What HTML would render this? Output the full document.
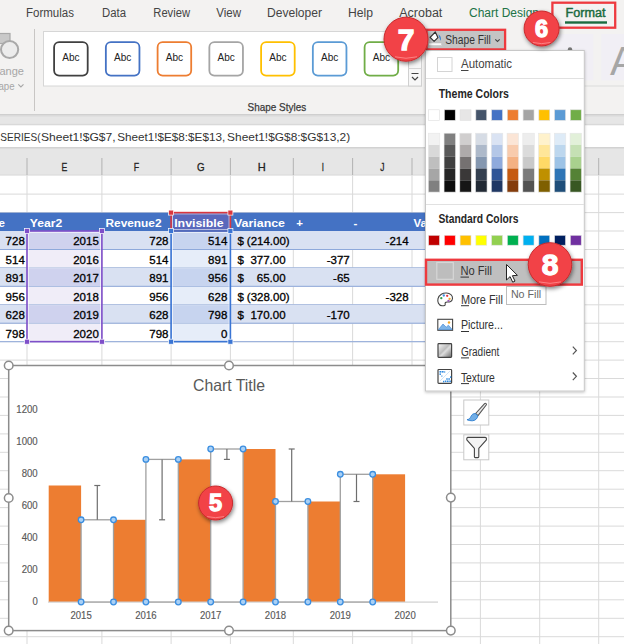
<!DOCTYPE html><html><head><meta charset="utf-8"><style>html,body{margin:0;padding:0;background:#fff;overflow:hidden}svg{display:block}text{font-family:"Liberation Sans",sans-serif}</style></head><body>
<svg width="624" height="644" viewBox="0 0 624 644">
<defs><filter id="sh" x="-20%" y="-20%" width="140%" height="140%"><feGaussianBlur in="SourceAlpha" stdDeviation="2"/><feOffset dx="1" dy="2"/><feComponentTransfer><feFuncA type="linear" slope="0.5"/></feComponentTransfer><feMerge><feMergeNode/><feMergeNode in="SourceGraphic"/></feMerge></filter>
<filter id="msh" x="-10%" y="-10%" width="120%" height="120%"><feGaussianBlur in="SourceAlpha" stdDeviation="1.5"/><feOffset dx="0" dy="1"/><feComponentTransfer><feFuncA type="linear" slope="0.25"/></feComponentTransfer><feMerge><feMergeNode/><feMergeNode in="SourceGraphic"/></feMerge></filter>
<radialGradient id="rg" cx="0.45" cy="0.4" r="0.6"><stop offset="0" stop-color="#ff4d4d"/><stop offset="1" stop-color="#f03a3a"/></radialGradient>
</defs>
<rect x="0" y="0" width="624" height="114" fill="#f3f2f1"/>
<text x="26" y="16.7" font-size="12" fill="#444" font-weight="normal" text-anchor="start" textLength="48" lengthAdjust="spacingAndGlyphs" >Formulas</text>
<text x="102" y="16.7" font-size="12" fill="#444" font-weight="normal" text-anchor="start" textLength="24" lengthAdjust="spacingAndGlyphs" >Data</text>
<text x="153.3" y="16.7" font-size="12" fill="#444" font-weight="normal" text-anchor="start" textLength="36.7" lengthAdjust="spacingAndGlyphs" >Review</text>
<text x="216.2" y="16.7" font-size="12" fill="#444" font-weight="normal" text-anchor="start" textLength="24.8" lengthAdjust="spacingAndGlyphs" >View</text>
<text x="267" y="16.7" font-size="12" fill="#444" font-weight="normal" text-anchor="start" textLength="55" lengthAdjust="spacingAndGlyphs" >Developer</text>
<text x="348" y="16.7" font-size="12" fill="#444" font-weight="normal" text-anchor="start" textLength="25" lengthAdjust="spacingAndGlyphs" >Help</text>
<text x="399.3" y="16.7" font-size="12" fill="#444" font-weight="normal" text-anchor="start" textLength="43" lengthAdjust="spacingAndGlyphs" >Acrobat</text>
<text x="469" y="16.7" font-size="12" fill="#217346" font-weight="normal" text-anchor="start" textLength="70" lengthAdjust="spacingAndGlyphs" >Chart Design</text>
<text x="565.6" y="16.7" font-size="12" fill="#1b6b3f" font-weight="normal" text-anchor="start" textLength="40" lengthAdjust="spacingAndGlyphs" stroke="#1b6b3f" stroke-width="0.45">Format</text>
<rect x="565" y="21.3" width="42" height="2.4" fill="#1b6b3f"/>
<rect x="552.4" y="2.7" width="62.8" height="25" fill="none" stroke="#ee3a3f" stroke-width="2.3"/>
<rect x="-4" y="33.5" width="14" height="10" fill="#c9c9c9" stroke="#a9a9a9" stroke-width="1.2"/>
<circle cx="9.6" cy="49.5" r="8.6" fill="#ececec" stroke="#a9a9a9" stroke-width="2"/>
<text x="-0.5" y="74.9" font-size="11.3" fill="#a6a6a6" font-weight="normal" text-anchor="start" textLength="24.5" lengthAdjust="spacingAndGlyphs" >ange</text>
<text x="-1.5" y="89.5" font-size="11.3" fill="#a6a6a6" font-weight="normal" text-anchor="start" textLength="16.1" lengthAdjust="spacingAndGlyphs" >ape</text>
<path d="M18.3 84.3 l2.6 2.6 l2.6 -2.6" fill="none" stroke="#a6a6a6" stroke-width="1.1"/>
<rect x="34" y="29" width="1" height="82" fill="#c8c6c4"/>
<rect x="43.5" y="31.5" width="378" height="54.5" fill="#fff" stroke="#d6d6d6" stroke-width="1"/>
<rect x="54.10" y="42.2" width="33.6" height="33.4" rx="5" fill="#fff" stroke="#404040" stroke-width="1.8"/>
<text x="71.0" y="60.9" font-size="10.7" fill="#222" font-weight="normal" text-anchor="middle" textLength="17.3" lengthAdjust="spacingAndGlyphs" >Abc</text>
<rect x="105.85" y="42.2" width="33.6" height="33.4" rx="5" fill="#fff" stroke="#4472c4" stroke-width="1.8"/>
<text x="122.75" y="60.9" font-size="10.7" fill="#222" font-weight="normal" text-anchor="middle" textLength="17.3" lengthAdjust="spacingAndGlyphs" >Abc</text>
<rect x="157.60" y="42.2" width="33.6" height="33.4" rx="5" fill="#fff" stroke="#ed7d31" stroke-width="1.8"/>
<text x="174.5" y="60.9" font-size="10.7" fill="#222" font-weight="normal" text-anchor="middle" textLength="17.3" lengthAdjust="spacingAndGlyphs" >Abc</text>
<rect x="209.35" y="42.2" width="33.6" height="33.4" rx="5" fill="#fff" stroke="#a5a5a5" stroke-width="1.8"/>
<text x="226.25" y="60.9" font-size="10.7" fill="#222" font-weight="normal" text-anchor="middle" textLength="17.3" lengthAdjust="spacingAndGlyphs" >Abc</text>
<rect x="261.10" y="42.2" width="33.6" height="33.4" rx="5" fill="#fff" stroke="#ffc000" stroke-width="1.8"/>
<text x="277.99999999999994" y="60.9" font-size="10.7" fill="#222" font-weight="normal" text-anchor="middle" textLength="17.3" lengthAdjust="spacingAndGlyphs" >Abc</text>
<rect x="312.85" y="42.2" width="33.6" height="33.4" rx="5" fill="#fff" stroke="#5b9bd5" stroke-width="1.8"/>
<text x="329.74999999999994" y="60.9" font-size="10.7" fill="#222" font-weight="normal" text-anchor="middle" textLength="17.3" lengthAdjust="spacingAndGlyphs" >Abc</text>
<rect x="364.60" y="42.2" width="33.6" height="33.4" rx="5" fill="#fff" stroke="#70ad47" stroke-width="1.8"/>
<text x="381.49999999999994" y="60.9" font-size="10.7" fill="#222" font-weight="normal" text-anchor="middle" textLength="17.3" lengthAdjust="spacingAndGlyphs" >Abc</text>
<rect x="408.5" y="31.5" width="13" height="54.5" fill="#f7f7f7" stroke="#d0d0d0"/>
<line x1="408.5" y1="50" x2="421.5" y2="50" stroke="#d6d6d6"/>
<line x1="408.5" y1="68.5" x2="421.5" y2="68.5" stroke="#d6d6d6"/>
<path d="M411.5 73.5 h7 M412 77 l3 3 l3 -3" fill="none" stroke="#444" stroke-width="1.2"/>
<text x="276.9" y="111" font-size="11.5" fill="#3a3a3a" font-weight="normal" text-anchor="middle" textLength="58.6" lengthAdjust="spacingAndGlyphs" stroke="#3a3a3a" stroke-width="0.25">Shape Styles</text>
<rect x="553.7" y="34" width="39.7" height="46.5" fill="#f1eff5"/>
<rect x="601.4" y="34" width="23" height="46.5" fill="#f1eff5"/>
<text x="610" y="75" font-size="40" fill="#a6a6a6" font-weight="normal" text-anchor="start" >A</text>
<rect x="584" y="85.5" width="40" height="1" fill="#dcdcdc"/>
<rect x="0" y="114" width="624" height="11" fill="#e6e6e6"/>
<rect x="0" y="114" width="624" height="1" fill="#cfcfcf"/>
<rect x="0" y="115" width="624" height="1.5" fill="#dadada"/>
<rect x="0" y="123.8" width="624" height="1.8" fill="#d9d9d9"/>
<rect x="0" y="125.5" width="624" height="21.5" fill="#fff"/>
<text x="0.3" y="141" font-size="11.3" fill="#333" font-weight="normal" text-anchor="start" textLength="40.2" lengthAdjust="spacingAndGlyphs" >SERIES(</text>
<text x="41" y="141" font-size="11.3" fill="#333" font-weight="normal" text-anchor="start" textLength="74.6" lengthAdjust="spacingAndGlyphs" >Sheet1!$G$7,</text>
<text x="117.2" y="141" font-size="11.3" fill="#333" font-weight="normal" text-anchor="start" textLength="108.0" lengthAdjust="spacingAndGlyphs" >Sheet1!$E$8:$E$13,</text>
<text x="227.1" y="141" font-size="11.3" fill="#333" font-weight="normal" text-anchor="start" textLength="123.1" lengthAdjust="spacingAndGlyphs" >Sheet1!$G$8:$G$13,2)</text>
<rect x="0" y="147" width="624" height="28" fill="#e6e6e6"/>
<rect x="0" y="147" width="624" height="1.5" fill="#d2d2d2"/>
<rect x="26.5" y="158" width="1" height="17" fill="#b2b2b2"/>
<rect x="101.4" y="158" width="1" height="17" fill="#b2b2b2"/>
<rect x="170.6" y="158" width="1" height="17" fill="#b2b2b2"/>
<rect x="229.9" y="158" width="1" height="17" fill="#b2b2b2"/>
<rect x="292.8" y="158" width="1" height="17" fill="#b2b2b2"/>
<rect x="352.1" y="158" width="1" height="17" fill="#b2b2b2"/>
<rect x="411.5" y="158" width="1" height="17" fill="#b2b2b2"/>
<rect x="479.9" y="158" width="1" height="17" fill="#b2b2b2"/>
<rect x="539.2" y="158" width="1" height="17" fill="#b2b2b2"/>
<rect x="598.2" y="158" width="1" height="17" fill="#b2b2b2"/>
<rect x="0" y="174.9" width="624" height="1.2" fill="#b4b4b4"/>
<text x="64.45" y="170.7" font-size="11.8" fill="#222" font-weight="normal" text-anchor="middle" stroke="#222" stroke-width="0.3" textLength="5.8" lengthAdjust="spacingAndGlyphs" >E</text>
<text x="136.5" y="170.7" font-size="11.8" fill="#222" font-weight="normal" text-anchor="middle" stroke="#222" stroke-width="0.3" textLength="5.4" lengthAdjust="spacingAndGlyphs" >F</text>
<text x="200.75" y="170.7" font-size="11.8" fill="#222" font-weight="normal" text-anchor="middle" stroke="#222" stroke-width="0.3" textLength="7.6" lengthAdjust="spacingAndGlyphs" >G</text>
<text x="261.85" y="170.7" font-size="11.8" fill="#222" font-weight="normal" text-anchor="middle" stroke="#222" stroke-width="0.3" textLength="8" lengthAdjust="spacingAndGlyphs" >H</text>
<text x="322.95000000000005" y="170.7" font-size="11.8" fill="#222" font-weight="normal" text-anchor="middle" stroke="#222" stroke-width="0.3" textLength="2.2" lengthAdjust="spacingAndGlyphs" >I</text>
<text x="382.3" y="170.7" font-size="11.8" fill="#222" font-weight="normal" text-anchor="middle" stroke="#222" stroke-width="0.3" textLength="4.2" lengthAdjust="spacingAndGlyphs" >J</text>
<rect x="0" y="175.3" width="624" height="469" fill="#fff"/>
<rect x="0" y="193.6" width="624" height="1" fill="#dadada"/>
<rect x="0" y="212.1" width="624" height="1" fill="#dadada"/>
<rect x="0" y="230.5" width="624" height="1" fill="#dadada"/>
<rect x="0" y="249.0" width="624" height="1" fill="#dadada"/>
<rect x="0" y="267.4" width="624" height="1" fill="#dadada"/>
<rect x="0" y="285.8" width="624" height="1" fill="#dadada"/>
<rect x="0" y="304.3" width="624" height="1" fill="#dadada"/>
<rect x="0" y="322.7" width="624" height="1" fill="#dadada"/>
<rect x="0" y="341.2" width="624" height="1" fill="#dadada"/>
<rect x="0" y="359.6" width="624" height="1" fill="#dadada"/>
<rect x="0" y="378.0" width="624" height="1" fill="#dadada"/>
<rect x="0" y="396.5" width="624" height="1" fill="#dadada"/>
<rect x="0" y="414.9" width="624" height="1" fill="#dadada"/>
<rect x="0" y="433.4" width="624" height="1" fill="#dadada"/>
<rect x="0" y="451.8" width="624" height="1" fill="#dadada"/>
<rect x="0" y="470.2" width="624" height="1" fill="#dadada"/>
<rect x="0" y="488.7" width="624" height="1" fill="#dadada"/>
<rect x="0" y="507.1" width="624" height="1" fill="#dadada"/>
<rect x="0" y="525.6" width="624" height="1" fill="#dadada"/>
<rect x="0" y="544.0" width="624" height="1" fill="#dadada"/>
<rect x="0" y="562.4" width="624" height="1" fill="#dadada"/>
<rect x="0" y="580.9" width="624" height="1" fill="#dadada"/>
<rect x="0" y="599.3" width="624" height="1" fill="#dadada"/>
<rect x="0" y="617.8" width="624" height="1" fill="#dadada"/>
<rect x="0" y="636.2" width="624" height="1" fill="#dadada"/>
<rect x="26.5" y="175.3" width="1" height="469" fill="#dadada"/>
<rect x="101.4" y="175.3" width="1" height="469" fill="#dadada"/>
<rect x="170.6" y="175.3" width="1" height="469" fill="#dadada"/>
<rect x="229.9" y="175.3" width="1" height="469" fill="#dadada"/>
<rect x="292.8" y="175.3" width="1" height="469" fill="#dadada"/>
<rect x="352.1" y="175.3" width="1" height="469" fill="#dadada"/>
<rect x="411.5" y="175.3" width="1" height="469" fill="#dadada"/>
<rect x="479.9" y="175.3" width="1" height="469" fill="#dadada"/>
<rect x="539.2" y="175.3" width="1" height="469" fill="#dadada"/>
<rect x="598.2" y="175.3" width="1" height="469" fill="#dadada"/>
<rect x="0" y="212.6" width="430" height="18.4" fill="#4472c4"/>
<rect x="0" y="231.0" width="430" height="18.4" fill="#d9e1f2"/>
<rect x="0" y="249.0" width="430" height="1" fill="#8ea9db"/>
<rect x="0" y="267.4" width="430" height="1" fill="#8ea9db"/>
<rect x="0" y="267.9" width="430" height="18.4" fill="#d9e1f2"/>
<rect x="0" y="285.8" width="430" height="1" fill="#8ea9db"/>
<rect x="0" y="304.3" width="430" height="1" fill="#8ea9db"/>
<rect x="0" y="304.8" width="430" height="18.4" fill="#d9e1f2"/>
<rect x="0" y="322.7" width="430" height="1" fill="#8ea9db"/>
<rect x="0" y="341.2" width="430" height="1" fill="#8ea9db"/>
<text x="-1.5" y="226.77999999999997" font-size="11.5" fill="#fff" font-weight="bold" text-anchor="start" >e</text>
<text x="29.8" y="226.77999999999997" font-size="11.5" fill="#fff" font-weight="bold" text-anchor="start" textLength="32.4" lengthAdjust="spacingAndGlyphs" >Year2</text>
<text x="105.5" y="226.77999999999997" font-size="11.5" fill="#fff" font-weight="bold" text-anchor="start" textLength="56" lengthAdjust="spacingAndGlyphs" >Revenue2</text>
<rect x="171.1" y="212.6" width="59.3" height="18.4" fill="#5a68bc"/>
<text x="174.2" y="226.77999999999997" font-size="11.5" fill="#fff" font-weight="bold" text-anchor="start" textLength="49.5" lengthAdjust="spacingAndGlyphs" >Invisible</text>
<text x="234" y="226.77999999999997" font-size="11.5" fill="#fff" font-weight="bold" text-anchor="start" textLength="51" lengthAdjust="spacingAndGlyphs" >Variance</text>
<text x="296.3" y="226.77999999999997" font-size="11.5" fill="#fff" font-weight="bold" text-anchor="start" >+</text>
<text x="353.5" y="226.77999999999997" font-size="11.5" fill="#fff" font-weight="bold" text-anchor="start" >-</text>
<text x="413.4" y="226.77999999999997" font-size="11.5" fill="#fff" font-weight="bold" text-anchor="start" >Va</text>
<rect x="27" y="231.5" width="74.9" height="17.4" fill="#cfd2ee"/>
<rect x="171.1" y="231.5" width="59.3" height="17.4" fill="#c7d4ef"/>
<rect x="27" y="250.0" width="74.9" height="17.4" fill="#f0edf8"/>
<rect x="171.1" y="250.0" width="59.3" height="17.4" fill="#e6edf9"/>
<rect x="27" y="268.4" width="74.9" height="17.4" fill="#cfd2ee"/>
<rect x="171.1" y="268.4" width="59.3" height="17.4" fill="#c7d4ef"/>
<rect x="27" y="286.8" width="74.9" height="17.4" fill="#f0edf8"/>
<rect x="171.1" y="286.8" width="59.3" height="17.4" fill="#e6edf9"/>
<rect x="27" y="305.3" width="74.9" height="17.4" fill="#cfd2ee"/>
<rect x="171.1" y="305.3" width="59.3" height="17.4" fill="#c7d4ef"/>
<rect x="27" y="323.7" width="74.9" height="17.4" fill="#f0edf8"/>
<rect x="171.1" y="323.7" width="59.3" height="17.4" fill="#e6edf9"/>
<text x="24.8" y="245.32" font-size="11.5" fill="#000" font-weight="normal" text-anchor="end" stroke="#000" stroke-width="0.3" >728</text>
<text x="98.8" y="245.32" font-size="11.5" fill="#000" font-weight="normal" text-anchor="end" stroke="#000" stroke-width="0.3" >2015</text>
<text x="168.5" y="245.32" font-size="11.5" fill="#000" font-weight="normal" text-anchor="end" stroke="#000" stroke-width="0.3" >728</text>
<text x="227.3" y="245.32" font-size="11.5" fill="#000" font-weight="normal" text-anchor="end" stroke="#000" stroke-width="0.3" >514</text>
<text x="237.4" y="245.32" font-size="11.5" fill="#000" font-weight="normal" text-anchor="start" stroke="#000" stroke-width="0.3" >$</text>
<text x="289.7" y="245.32" font-size="11.5" fill="#000" font-weight="normal" text-anchor="end" stroke="#000" stroke-width="0.3" >(214.00)</text>
<text x="408.6" y="245.32" font-size="11.5" fill="#000" font-weight="normal" text-anchor="end" stroke="#000" stroke-width="0.3" >-214</text>
<text x="24.8" y="263.76" font-size="11.5" fill="#000" font-weight="normal" text-anchor="end" stroke="#000" stroke-width="0.3" >514</text>
<text x="98.8" y="263.76" font-size="11.5" fill="#000" font-weight="normal" text-anchor="end" stroke="#000" stroke-width="0.3" >2016</text>
<text x="168.5" y="263.76" font-size="11.5" fill="#000" font-weight="normal" text-anchor="end" stroke="#000" stroke-width="0.3" >514</text>
<text x="227.3" y="263.76" font-size="11.5" fill="#000" font-weight="normal" text-anchor="end" stroke="#000" stroke-width="0.3" >891</text>
<text x="237.4" y="263.76" font-size="11.5" fill="#000" font-weight="normal" text-anchor="start" stroke="#000" stroke-width="0.3" >$</text>
<text x="285.6" y="263.76" font-size="11.5" fill="#000" font-weight="normal" text-anchor="end" stroke="#000" stroke-width="0.3" >377.00</text>
<text x="349.7" y="263.76" font-size="11.5" fill="#000" font-weight="normal" text-anchor="end" stroke="#000" stroke-width="0.3" >-377</text>
<text x="24.8" y="282.2" font-size="11.5" fill="#000" font-weight="normal" text-anchor="end" stroke="#000" stroke-width="0.3" >891</text>
<text x="98.8" y="282.2" font-size="11.5" fill="#000" font-weight="normal" text-anchor="end" stroke="#000" stroke-width="0.3" >2017</text>
<text x="168.5" y="282.2" font-size="11.5" fill="#000" font-weight="normal" text-anchor="end" stroke="#000" stroke-width="0.3" >891</text>
<text x="227.3" y="282.2" font-size="11.5" fill="#000" font-weight="normal" text-anchor="end" stroke="#000" stroke-width="0.3" >956</text>
<text x="237.4" y="282.2" font-size="11.5" fill="#000" font-weight="normal" text-anchor="start" stroke="#000" stroke-width="0.3" >$</text>
<text x="285.6" y="282.2" font-size="11.5" fill="#000" font-weight="normal" text-anchor="end" stroke="#000" stroke-width="0.3" >65.00</text>
<text x="349.7" y="282.2" font-size="11.5" fill="#000" font-weight="normal" text-anchor="end" stroke="#000" stroke-width="0.3" >-65</text>
<text x="24.8" y="300.64000000000004" font-size="11.5" fill="#000" font-weight="normal" text-anchor="end" stroke="#000" stroke-width="0.3" >956</text>
<text x="98.8" y="300.64000000000004" font-size="11.5" fill="#000" font-weight="normal" text-anchor="end" stroke="#000" stroke-width="0.3" >2018</text>
<text x="168.5" y="300.64000000000004" font-size="11.5" fill="#000" font-weight="normal" text-anchor="end" stroke="#000" stroke-width="0.3" >956</text>
<text x="227.3" y="300.64000000000004" font-size="11.5" fill="#000" font-weight="normal" text-anchor="end" stroke="#000" stroke-width="0.3" >628</text>
<text x="237.4" y="300.64000000000004" font-size="11.5" fill="#000" font-weight="normal" text-anchor="start" stroke="#000" stroke-width="0.3" >$</text>
<text x="289.7" y="300.64000000000004" font-size="11.5" fill="#000" font-weight="normal" text-anchor="end" stroke="#000" stroke-width="0.3" >(328.00)</text>
<text x="408.6" y="300.64000000000004" font-size="11.5" fill="#000" font-weight="normal" text-anchor="end" stroke="#000" stroke-width="0.3" >-328</text>
<text x="24.8" y="319.08" font-size="11.5" fill="#000" font-weight="normal" text-anchor="end" stroke="#000" stroke-width="0.3" >628</text>
<text x="98.8" y="319.08" font-size="11.5" fill="#000" font-weight="normal" text-anchor="end" stroke="#000" stroke-width="0.3" >2019</text>
<text x="168.5" y="319.08" font-size="11.5" fill="#000" font-weight="normal" text-anchor="end" stroke="#000" stroke-width="0.3" >628</text>
<text x="227.3" y="319.08" font-size="11.5" fill="#000" font-weight="normal" text-anchor="end" stroke="#000" stroke-width="0.3" >798</text>
<text x="237.4" y="319.08" font-size="11.5" fill="#000" font-weight="normal" text-anchor="start" stroke="#000" stroke-width="0.3" >$</text>
<text x="285.6" y="319.08" font-size="11.5" fill="#000" font-weight="normal" text-anchor="end" stroke="#000" stroke-width="0.3" >170.00</text>
<text x="349.7" y="319.08" font-size="11.5" fill="#000" font-weight="normal" text-anchor="end" stroke="#000" stroke-width="0.3" >-170</text>
<text x="24.8" y="337.52000000000004" font-size="11.5" fill="#000" font-weight="normal" text-anchor="end" stroke="#000" stroke-width="0.3" >798</text>
<text x="98.8" y="337.52000000000004" font-size="11.5" fill="#000" font-weight="normal" text-anchor="end" stroke="#000" stroke-width="0.3" >2020</text>
<text x="168.5" y="337.52000000000004" font-size="11.5" fill="#000" font-weight="normal" text-anchor="end" stroke="#000" stroke-width="0.3" >798</text>
<text x="227.3" y="337.52000000000004" font-size="11.5" fill="#000" font-weight="normal" text-anchor="end" stroke="#000" stroke-width="0.3" >0</text>
<rect x="28.3" y="232.3" width="72.3" height="108.0" fill="none" stroke="#fff" stroke-width="0.8" opacity="0.8"/>
<rect x="27.0" y="231.0" width="74.9" height="110.6" fill="none" stroke="#7f4fc9" stroke-width="1.6"/>
<rect x="24.5" y="228.5" width="5" height="5" fill="#7f4fc9" stroke="#fff" stroke-width="0.7"/>
<rect x="99.4" y="228.5" width="5" height="5" fill="#7f4fc9" stroke="#fff" stroke-width="0.7"/>
<rect x="24.5" y="339.2" width="5" height="5" fill="#7f4fc9" stroke="#fff" stroke-width="0.7"/>
<rect x="99.4" y="339.2" width="5" height="5" fill="#7f4fc9" stroke="#fff" stroke-width="0.7"/>
<rect x="172.4" y="213.9" width="56.7" height="15.8" fill="none" stroke="#fff" stroke-width="0.8" opacity="0.8"/>
<rect x="171.1" y="212.6" width="59.3" height="18.4" fill="none" stroke="#d9363e" stroke-width="1.6"/>
<rect x="172.4" y="232.3" width="56.7" height="108.0" fill="none" stroke="#fff" stroke-width="0.8" opacity="0.8"/>
<rect x="171.1" y="231.0" width="59.3" height="110.6" fill="none" stroke="#3a75d4" stroke-width="1.6"/>
<rect x="168.6" y="210.1" width="5" height="5" fill="#d9363e" stroke="#fff" stroke-width="0.7"/>
<rect x="227.9" y="210.1" width="5" height="5" fill="#d9363e" stroke="#fff" stroke-width="0.7"/>
<rect x="168.6" y="228.5" width="5" height="5" fill="#3a75d4" stroke="#fff" stroke-width="0.7"/>
<rect x="227.9" y="228.5" width="5" height="5" fill="#3a75d4" stroke="#fff" stroke-width="0.7"/>
<rect x="168.6" y="339.2" width="5" height="5" fill="#3a75d4" stroke="#fff" stroke-width="0.7"/>
<rect x="227.9" y="339.2" width="5" height="5" fill="#3a75d4" stroke="#fff" stroke-width="0.7"/>
<rect x="8.7" y="365.5" width="442.1" height="265.1" fill="#fff" stroke="#8c8c8c" stroke-width="1.5"/>
<text x="229" y="391.2" font-size="16.5" fill="#595959" font-weight="normal" text-anchor="middle" textLength="72" lengthAdjust="spacingAndGlyphs" >Chart Title</text>
<text x="37.7" y="605.1" font-size="10.2" fill="#595959" font-weight="normal" text-anchor="end" stroke="#595959" stroke-width="0.15" textLength="5.3" lengthAdjust="spacingAndGlyphs" >0</text>
<text x="37.7" y="573.13" font-size="10.2" fill="#595959" font-weight="normal" text-anchor="end" stroke="#595959" stroke-width="0.15" textLength="16.0" lengthAdjust="spacingAndGlyphs" >200</text>
<text x="37.7" y="541.1600000000001" font-size="10.2" fill="#595959" font-weight="normal" text-anchor="end" stroke="#595959" stroke-width="0.15" textLength="16.0" lengthAdjust="spacingAndGlyphs" >400</text>
<text x="37.7" y="509.19000000000005" font-size="10.2" fill="#595959" font-weight="normal" text-anchor="end" stroke="#595959" stroke-width="0.15" textLength="16.0" lengthAdjust="spacingAndGlyphs" >600</text>
<text x="37.7" y="477.22" font-size="10.2" fill="#595959" font-weight="normal" text-anchor="end" stroke="#595959" stroke-width="0.15" textLength="16.0" lengthAdjust="spacingAndGlyphs" >800</text>
<text x="37.7" y="445.25" font-size="10.2" fill="#595959" font-weight="normal" text-anchor="end" stroke="#595959" stroke-width="0.15" textLength="21.4" lengthAdjust="spacingAndGlyphs" >1000</text>
<text x="37.7" y="413.28000000000003" font-size="10.2" fill="#595959" font-weight="normal" text-anchor="end" stroke="#595959" stroke-width="0.15" textLength="21.4" lengthAdjust="spacingAndGlyphs" >1200</text>
<rect x="48.7" y="485.5" width="32.4" height="116.5" fill="#ed7d31"/>
<rect x="113.5" y="519.8" width="32.4" height="82.2" fill="#ed7d31"/>
<rect x="178.3" y="459.4" width="32.4" height="142.6" fill="#ed7d31"/>
<rect x="243.1" y="449.0" width="32.4" height="153.0" fill="#ed7d31"/>
<rect x="307.9" y="501.5" width="32.4" height="100.5" fill="#ed7d31"/>
<rect x="372.7" y="474.3" width="32.4" height="127.7" fill="#ed7d31"/>
<rect x="48" y="601.5" width="390" height="1.2" fill="#d0d0d0"/>
<rect x="81.1" y="519.8" width="32.4" height="82.2" fill="#fff" stroke="#a0a0a0" stroke-width="1.3"/>
<rect x="145.9" y="459.4" width="32.4" height="142.6" fill="#fff" stroke="#a0a0a0" stroke-width="1.3"/>
<rect x="210.7" y="449.0" width="32.4" height="153.0" fill="#fff" stroke="#a0a0a0" stroke-width="1.3"/>
<rect x="275.5" y="501.5" width="32.4" height="100.5" fill="#fff" stroke="#a0a0a0" stroke-width="1.3"/>
<rect x="340.3" y="474.3" width="32.4" height="127.7" fill="#fff" stroke="#a0a0a0" stroke-width="1.3"/>
<line x1="97.3" y1="519.8" x2="97.3" y2="485.5" stroke="#6e6e6e" stroke-width="1.2"/>
<line x1="94.3" y1="485.5" x2="100.3" y2="485.5" stroke="#6e6e6e" stroke-width="1.2"/>
<line x1="162.1" y1="459.4" x2="162.1" y2="519.8" stroke="#6e6e6e" stroke-width="1.2"/>
<line x1="159.1" y1="519.8" x2="165.1" y2="519.8" stroke="#6e6e6e" stroke-width="1.2"/>
<line x1="226.9" y1="449.0" x2="226.9" y2="459.4" stroke="#6e6e6e" stroke-width="1.2"/>
<line x1="223.9" y1="459.4" x2="229.9" y2="459.4" stroke="#6e6e6e" stroke-width="1.2"/>
<line x1="291.7" y1="501.5" x2="291.7" y2="449.0" stroke="#6e6e6e" stroke-width="1.2"/>
<line x1="288.7" y1="449.0" x2="294.7" y2="449.0" stroke="#6e6e6e" stroke-width="1.2"/>
<line x1="356.5" y1="474.3" x2="356.5" y2="501.5" stroke="#6e6e6e" stroke-width="1.2"/>
<line x1="353.5" y1="501.5" x2="359.5" y2="501.5" stroke="#6e6e6e" stroke-width="1.2"/>
<circle cx="81.1" cy="519.8" r="2.8" fill="#a9d0f5" stroke="#3b8ee0" stroke-width="1.3"/>
<circle cx="113.5" cy="519.8" r="2.8" fill="#a9d0f5" stroke="#3b8ee0" stroke-width="1.3"/>
<circle cx="81.1" cy="602.0" r="2.8" fill="#a9d0f5" stroke="#3b8ee0" stroke-width="1.3"/>
<circle cx="113.5" cy="602.0" r="2.8" fill="#a9d0f5" stroke="#3b8ee0" stroke-width="1.3"/>
<circle cx="145.9" cy="459.4" r="2.8" fill="#a9d0f5" stroke="#3b8ee0" stroke-width="1.3"/>
<circle cx="178.3" cy="459.4" r="2.8" fill="#a9d0f5" stroke="#3b8ee0" stroke-width="1.3"/>
<circle cx="145.9" cy="602.0" r="2.8" fill="#a9d0f5" stroke="#3b8ee0" stroke-width="1.3"/>
<circle cx="178.3" cy="602.0" r="2.8" fill="#a9d0f5" stroke="#3b8ee0" stroke-width="1.3"/>
<circle cx="210.7" cy="449.0" r="2.8" fill="#a9d0f5" stroke="#3b8ee0" stroke-width="1.3"/>
<circle cx="243.1" cy="449.0" r="2.8" fill="#a9d0f5" stroke="#3b8ee0" stroke-width="1.3"/>
<circle cx="210.7" cy="602.0" r="2.8" fill="#a9d0f5" stroke="#3b8ee0" stroke-width="1.3"/>
<circle cx="243.1" cy="602.0" r="2.8" fill="#a9d0f5" stroke="#3b8ee0" stroke-width="1.3"/>
<circle cx="275.5" cy="501.5" r="2.8" fill="#a9d0f5" stroke="#3b8ee0" stroke-width="1.3"/>
<circle cx="307.9" cy="501.5" r="2.8" fill="#a9d0f5" stroke="#3b8ee0" stroke-width="1.3"/>
<circle cx="275.5" cy="602.0" r="2.8" fill="#a9d0f5" stroke="#3b8ee0" stroke-width="1.3"/>
<circle cx="307.9" cy="602.0" r="2.8" fill="#a9d0f5" stroke="#3b8ee0" stroke-width="1.3"/>
<circle cx="340.3" cy="474.3" r="2.8" fill="#a9d0f5" stroke="#3b8ee0" stroke-width="1.3"/>
<circle cx="372.7" cy="474.3" r="2.8" fill="#a9d0f5" stroke="#3b8ee0" stroke-width="1.3"/>
<circle cx="340.3" cy="602.0" r="2.8" fill="#a9d0f5" stroke="#3b8ee0" stroke-width="1.3"/>
<circle cx="372.7" cy="602.0" r="2.8" fill="#a9d0f5" stroke="#3b8ee0" stroke-width="1.3"/>
<text x="81.1" y="619.3" font-size="10.2" fill="#595959" font-weight="normal" text-anchor="middle" stroke="#595959" stroke-width="0.15" textLength="21.3" lengthAdjust="spacingAndGlyphs" >2015</text>
<text x="145.89999999999998" y="619.3" font-size="10.2" fill="#595959" font-weight="normal" text-anchor="middle" stroke="#595959" stroke-width="0.15" textLength="21.3" lengthAdjust="spacingAndGlyphs" >2016</text>
<text x="210.7" y="619.3" font-size="10.2" fill="#595959" font-weight="normal" text-anchor="middle" stroke="#595959" stroke-width="0.15" textLength="21.3" lengthAdjust="spacingAndGlyphs" >2017</text>
<text x="275.5" y="619.3" font-size="10.2" fill="#595959" font-weight="normal" text-anchor="middle" stroke="#595959" stroke-width="0.15" textLength="21.3" lengthAdjust="spacingAndGlyphs" >2018</text>
<text x="340.29999999999995" y="619.3" font-size="10.2" fill="#595959" font-weight="normal" text-anchor="middle" stroke="#595959" stroke-width="0.15" textLength="21.3" lengthAdjust="spacingAndGlyphs" >2019</text>
<text x="405.1" y="619.3" font-size="10.2" fill="#595959" font-weight="normal" text-anchor="middle" stroke="#595959" stroke-width="0.15" textLength="21.3" lengthAdjust="spacingAndGlyphs" >2020</text>
<circle cx="8.7" cy="365.5" r="4.3" fill="#fff" stroke="#8c8c8c" stroke-width="1.5"/>
<circle cx="229" cy="365.5" r="4.3" fill="#fff" stroke="#8c8c8c" stroke-width="1.5"/>
<circle cx="8.7" cy="498" r="4.3" fill="#fff" stroke="#8c8c8c" stroke-width="1.5"/>
<circle cx="450.8" cy="497.6" r="4.3" fill="#fff" stroke="#8c8c8c" stroke-width="1.5"/>
<circle cx="8.7" cy="630.6" r="4.3" fill="#fff" stroke="#8c8c8c" stroke-width="1.5"/>
<circle cx="229" cy="630.6" r="4.3" fill="#fff" stroke="#8c8c8c" stroke-width="1.5"/>
<circle cx="450.8" cy="630.6" r="4.3" fill="#fff" stroke="#8c8c8c" stroke-width="1.5"/>
<rect x="463.8" y="400" width="25" height="25" fill="#fff" stroke="#c8c8c8"/>
<rect x="463.8" y="434.8" width="25" height="25" fill="#fff" stroke="#c8c8c8"/>
<path d="M484.6 403.6 c1 -0.8 2.4 0.3 1.6 1.4 l-8.2 10.6 l-2.4 -2.1 z" fill="#e8e8e8" stroke="#555" stroke-width="1.1" stroke-linejoin="round"/>
<path d="M475.4 413.6 l2.4 2.1 c-0.2 2.7 -2.4 5 -5.6 5.1 c-2 0.1 -3.8 -0.5 -5.2 -1.1 c2.3 -0.3 3.2 -1.6 3.9 -3.2 c0.8 -1.8 2.4 -3.2 4.5 -2.9 z" fill="#72aee6" stroke="#2f7fd0" stroke-width="0.9"/>
<path d="M467.6 437.4 h17.6 c0.8 0 1.2 0.4 1.2 1.2 v1.2 l-7.6 8.6 v8.4 c0 0.5 -0.3 0.8 -0.8 0.8 h-2.8 c-0.5 0 -0.8 -0.3 -0.8 -0.8 v-8.4 l-7.6 -8.6 v-1.2 c0 -0.8 0.4 -1.2 1.2 -1.2 z" fill="#f4f4f4" stroke="#444" stroke-width="1.1" stroke-linejoin="round"/>
<rect x="426.5" y="29.8" width="78.6" height="19.6" fill="#c4c4c4" stroke="#ee3a3f" stroke-width="2.3"/>
<path d="M430.1 37.4 L435.3 32 L437.9 37.6 L434.1 41.4 Z" fill="#fff" stroke="#333" stroke-width="1.2" stroke-linejoin="round"/>
<path d="M438.4 34.4 C440.6 35.6 441.6 38.2 440.3 40.8 C439.8 38.6 439.1 36.4 438.4 34.4 Z" fill="#2f7fd0"/>
<rect x="428.6" y="43" width="13" height="2.6" fill="#fafafa" stroke="#b0b0b0" stroke-width="0.4"/>
<circle cx="570" cy="49.5" r="2.2" fill="#777"/>
<text x="445.2" y="43.5" font-size="12" fill="#333" font-weight="normal" text-anchor="start" textLength="45.6" lengthAdjust="spacingAndGlyphs" >Shape Fill</text>
<path d="M495.3 39.3 l2.2 2.2 l2.2 -2.2" fill="none" stroke="#444" stroke-width="1.1"/>
<g filter="url(#msh)"><rect x="425.5" y="50.5" width="158.8" height="340.5" fill="#fff" stroke="#c8c8c8" stroke-width="1"/></g>
<rect x="437.5" y="57.5" width="14.5" height="14" fill="#fff" stroke="#d4d4d4"/>
<text x="461" y="68.3" font-size="12" fill="#444" font-weight="normal" text-anchor="start" textLength="51" lengthAdjust="spacingAndGlyphs" >Automatic</text>
<rect x="461" y="70" width="7.5" height="1" fill="#444"/>
<rect x="426" y="78" width="158" height="1" fill="#e1e1e1"/>
<text x="438.7" y="98" font-size="12" fill="#262626" font-weight="bold" text-anchor="start" textLength="70.2" lengthAdjust="spacingAndGlyphs" >Theme Colors</text>
<rect x="428.60" y="109.8" width="10.9" height="10.5" fill="#ffffff" stroke="#dedede" stroke-width="0.6"/>
<rect x="428.30" y="133.20" width="11.5" height="11.78" fill="#f2f2f2"/>
<rect x="428.30" y="144.98" width="11.5" height="11.78" fill="#d9d9d9"/>
<rect x="428.30" y="156.76" width="11.5" height="11.78" fill="#bfbfbf"/>
<rect x="428.30" y="168.54" width="11.5" height="11.78" fill="#a6a6a6"/>
<rect x="428.30" y="180.32" width="11.5" height="11.78" fill="#808080"/>
<rect x="428.30" y="133.2" width="11.5" height="58.9" fill="none" stroke="#e6e6e6" stroke-width="0.6"/>
<rect x="428.60" y="235.3" width="10.9" height="9.9" fill="#c00000" stroke="#e2e2e2" stroke-width="0.6"/>
<rect x="444.35" y="109.8" width="10.9" height="10.5" fill="#000000" stroke="#dedede" stroke-width="0.6"/>
<rect x="444.05" y="133.20" width="11.5" height="11.78" fill="#808080"/>
<rect x="444.05" y="144.98" width="11.5" height="11.78" fill="#595959"/>
<rect x="444.05" y="156.76" width="11.5" height="11.78" fill="#404040"/>
<rect x="444.05" y="168.54" width="11.5" height="11.78" fill="#262626"/>
<rect x="444.05" y="180.32" width="11.5" height="11.78" fill="#0d0d0d"/>
<rect x="444.05" y="133.2" width="11.5" height="58.9" fill="none" stroke="#e6e6e6" stroke-width="0.6"/>
<rect x="444.35" y="235.3" width="10.9" height="9.9" fill="#ff0000" stroke="#e2e2e2" stroke-width="0.6"/>
<rect x="460.10" y="109.8" width="10.9" height="10.5" fill="#e7e6e6" stroke="#dedede" stroke-width="0.6"/>
<rect x="459.80" y="133.20" width="11.5" height="11.78" fill="#d0cece"/>
<rect x="459.80" y="144.98" width="11.5" height="11.78" fill="#aeaaaa"/>
<rect x="459.80" y="156.76" width="11.5" height="11.78" fill="#757171"/>
<rect x="459.80" y="168.54" width="11.5" height="11.78" fill="#3a3838"/>
<rect x="459.80" y="180.32" width="11.5" height="11.78" fill="#161616"/>
<rect x="459.80" y="133.2" width="11.5" height="58.9" fill="none" stroke="#e6e6e6" stroke-width="0.6"/>
<rect x="460.10" y="235.3" width="10.9" height="9.9" fill="#ffc000" stroke="#e2e2e2" stroke-width="0.6"/>
<rect x="475.85" y="109.8" width="10.9" height="10.5" fill="#44546a" stroke="#dedede" stroke-width="0.6"/>
<rect x="475.55" y="133.20" width="11.5" height="11.78" fill="#d6dce5"/>
<rect x="475.55" y="144.98" width="11.5" height="11.78" fill="#adb9ca"/>
<rect x="475.55" y="156.76" width="11.5" height="11.78" fill="#8497b0"/>
<rect x="475.55" y="168.54" width="11.5" height="11.78" fill="#333f50"/>
<rect x="475.55" y="180.32" width="11.5" height="11.78" fill="#222a35"/>
<rect x="475.55" y="133.2" width="11.5" height="58.9" fill="none" stroke="#e6e6e6" stroke-width="0.6"/>
<rect x="475.85" y="235.3" width="10.9" height="9.9" fill="#ffff00" stroke="#e2e2e2" stroke-width="0.6"/>
<rect x="491.60" y="109.8" width="10.9" height="10.5" fill="#4472c4" stroke="#dedede" stroke-width="0.6"/>
<rect x="491.30" y="133.20" width="11.5" height="11.78" fill="#dae3f3"/>
<rect x="491.30" y="144.98" width="11.5" height="11.78" fill="#b4c7e7"/>
<rect x="491.30" y="156.76" width="11.5" height="11.78" fill="#8faadc"/>
<rect x="491.30" y="168.54" width="11.5" height="11.78" fill="#2f5597"/>
<rect x="491.30" y="180.32" width="11.5" height="11.78" fill="#203864"/>
<rect x="491.30" y="133.2" width="11.5" height="58.9" fill="none" stroke="#e6e6e6" stroke-width="0.6"/>
<rect x="491.60" y="235.3" width="10.9" height="9.9" fill="#92d050" stroke="#e2e2e2" stroke-width="0.6"/>
<rect x="507.35" y="109.8" width="10.9" height="10.5" fill="#ed7d31" stroke="#dedede" stroke-width="0.6"/>
<rect x="507.05" y="133.20" width="11.5" height="11.78" fill="#fbe5d6"/>
<rect x="507.05" y="144.98" width="11.5" height="11.78" fill="#f8cbad"/>
<rect x="507.05" y="156.76" width="11.5" height="11.78" fill="#f4b183"/>
<rect x="507.05" y="168.54" width="11.5" height="11.78" fill="#c55a11"/>
<rect x="507.05" y="180.32" width="11.5" height="11.78" fill="#843c0c"/>
<rect x="507.05" y="133.2" width="11.5" height="58.9" fill="none" stroke="#e6e6e6" stroke-width="0.6"/>
<rect x="507.35" y="235.3" width="10.9" height="9.9" fill="#00b050" stroke="#e2e2e2" stroke-width="0.6"/>
<rect x="523.10" y="109.8" width="10.9" height="10.5" fill="#a5a5a5" stroke="#dedede" stroke-width="0.6"/>
<rect x="522.80" y="133.20" width="11.5" height="11.78" fill="#ededed"/>
<rect x="522.80" y="144.98" width="11.5" height="11.78" fill="#dbdbdb"/>
<rect x="522.80" y="156.76" width="11.5" height="11.78" fill="#c9c9c9"/>
<rect x="522.80" y="168.54" width="11.5" height="11.78" fill="#7b7b7b"/>
<rect x="522.80" y="180.32" width="11.5" height="11.78" fill="#525252"/>
<rect x="522.80" y="133.2" width="11.5" height="58.9" fill="none" stroke="#e6e6e6" stroke-width="0.6"/>
<rect x="523.10" y="235.3" width="10.9" height="9.9" fill="#00b0f0" stroke="#e2e2e2" stroke-width="0.6"/>
<rect x="538.85" y="109.8" width="10.9" height="10.5" fill="#ffc000" stroke="#dedede" stroke-width="0.6"/>
<rect x="538.55" y="133.20" width="11.5" height="11.78" fill="#fff2cc"/>
<rect x="538.55" y="144.98" width="11.5" height="11.78" fill="#ffe699"/>
<rect x="538.55" y="156.76" width="11.5" height="11.78" fill="#ffd966"/>
<rect x="538.55" y="168.54" width="11.5" height="11.78" fill="#bf9000"/>
<rect x="538.55" y="180.32" width="11.5" height="11.78" fill="#7f6000"/>
<rect x="538.55" y="133.2" width="11.5" height="58.9" fill="none" stroke="#e6e6e6" stroke-width="0.6"/>
<rect x="538.85" y="235.3" width="10.9" height="9.9" fill="#0070c0" stroke="#e2e2e2" stroke-width="0.6"/>
<rect x="554.60" y="109.8" width="10.9" height="10.5" fill="#5b9bd5" stroke="#dedede" stroke-width="0.6"/>
<rect x="554.30" y="133.20" width="11.5" height="11.78" fill="#deebf7"/>
<rect x="554.30" y="144.98" width="11.5" height="11.78" fill="#bdd7ee"/>
<rect x="554.30" y="156.76" width="11.5" height="11.78" fill="#9dc3e6"/>
<rect x="554.30" y="168.54" width="11.5" height="11.78" fill="#2e75b6"/>
<rect x="554.30" y="180.32" width="11.5" height="11.78" fill="#1f4e79"/>
<rect x="554.30" y="133.2" width="11.5" height="58.9" fill="none" stroke="#e6e6e6" stroke-width="0.6"/>
<rect x="554.60" y="235.3" width="10.9" height="9.9" fill="#002060" stroke="#e2e2e2" stroke-width="0.6"/>
<rect x="570.35" y="109.8" width="10.9" height="10.5" fill="#70ad47" stroke="#dedede" stroke-width="0.6"/>
<rect x="570.05" y="133.20" width="11.5" height="11.78" fill="#e2f0d9"/>
<rect x="570.05" y="144.98" width="11.5" height="11.78" fill="#c5e0b4"/>
<rect x="570.05" y="156.76" width="11.5" height="11.78" fill="#a9d18e"/>
<rect x="570.05" y="168.54" width="11.5" height="11.78" fill="#548235"/>
<rect x="570.05" y="180.32" width="11.5" height="11.78" fill="#385723"/>
<rect x="570.05" y="133.2" width="11.5" height="58.9" fill="none" stroke="#e6e6e6" stroke-width="0.6"/>
<rect x="570.35" y="235.3" width="10.9" height="9.9" fill="#7030a0" stroke="#e2e2e2" stroke-width="0.6"/>
<rect x="426" y="204" width="158" height="1" fill="#e1e1e1"/>
<text x="438.5" y="222.7" font-size="12" fill="#262626" font-weight="bold" text-anchor="start" textLength="80" lengthAdjust="spacingAndGlyphs" >Standard Colors</text>
<rect x="426" y="259.8" width="155.8" height="24.8" fill="#bfbfbf" stroke="#ee3a3f" stroke-width="2.4"/>
<rect x="436.8" y="262.5" width="16.5" height="16.8" fill="#bdbdbd" stroke="#d6d6d6" stroke-width="1.2"/>
<text x="460.5" y="275" font-size="12" fill="#333" font-weight="normal" text-anchor="start" textLength="31.5" lengthAdjust="spacingAndGlyphs" >No Fill</text>
<rect x="460.5" y="276.6" width="8.5" height="1" fill="#333"/>
<text x="460.9" y="303.6" font-size="12" fill="#333" font-weight="normal" text-anchor="start" textLength="42" lengthAdjust="spacingAndGlyphs" >More Fill</text>
<rect x="461" y="305.2" width="8" height="1" fill="#333"/>
<text x="460.9" y="329.4" font-size="12" fill="#333" font-weight="normal" text-anchor="start" textLength="42" lengthAdjust="spacingAndGlyphs" >Picture...</text>
<rect x="461" y="331.0" width="8" height="1" fill="#333"/>
<text x="460.9" y="355.8" font-size="12" fill="#333" font-weight="normal" text-anchor="start" textLength="38.5" lengthAdjust="spacingAndGlyphs" >Gradient</text>
<rect x="461" y="357.4" width="8" height="1" fill="#333"/>
<text x="460.9" y="381.5" font-size="12" fill="#333" font-weight="normal" text-anchor="start" textLength="34" lengthAdjust="spacingAndGlyphs" >Texture</text>
<rect x="461" y="383.1" width="8" height="1" fill="#333"/>
<path d="M572.8 346.7 l3.6 3.8 l-3.6 3.8" fill="none" stroke="#555" stroke-width="1.2"/>
<path d="M572.8 372.5 l3.6 3.8 l-3.6 3.8" fill="none" stroke="#555" stroke-width="1.2"/>
<path d="M442 305.8 C438.6 305.6 437.2 301.8 438 298.6 C439 294.6 443 292.8 446.5 293 C450 293.2 452.8 295.5 452.5 298.5 C452.2 301.5 449.5 302.2 447.5 302 C445.6 301.8 444.8 302.8 445.2 304.1 C445.6 305.5 444.2 305.9 442 305.8 Z" fill="#fff" stroke="#444" stroke-width="1.1"/>
<circle cx="441.3" cy="298.2" r="1.15" fill="#2e9e4f"/>
<circle cx="443.8" cy="295.5" r="1.15" fill="#3b8ee0"/>
<circle cx="447.2" cy="295.8" r="1.15" fill="#e8323b"/>
<circle cx="449.6" cy="298.8" r="1.15" fill="#f5a623"/>
<circle cx="448.5" cy="300.8" r="1.15" fill="#9b59b6"/>
<rect x="437.8" y="319.3" width="14.8" height="11" fill="#fff" stroke="#444" stroke-width="1.1"/>
<path d="M438.5 329.5 l4.5 -5.5 l3.2 3.2 l2.2 -2 l3.8 4.3 z" fill="#7fb5e8" stroke="#3b82d0" stroke-width="0.6"/>
<circle cx="449" cy="322.5" r="1.2" fill="#f5a623"/>
<defs><linearGradient id="gr" x1="0" y1="0" x2="1" y2="1"><stop offset="0" stop-color="#fbfbfb"/><stop offset="0.45" stop-color="#bdbdbd"/><stop offset="0.55" stop-color="#dedede"/><stop offset="1" stop-color="#6a6a6a"/></linearGradient></defs>
<rect x="438" y="343.6" width="13.6" height="13.8" rx="0.8" fill="url(#gr)" stroke="#444" stroke-width="1.2"/>
<rect x="438" y="369.5" width="13.6" height="13.8" rx="0.8" fill="#fff" stroke="#444" stroke-width="1.2"/>
<rect x="439.5" y="371" width="1.6" height="1.6" fill="#2f8be0"/>
<rect x="441.6" y="371" width="2" height="1.6" fill="#2f8be0"/>
<rect x="439.5" y="373.4" width="1.4" height="1.6" fill="#2f8be0"/>
<rect x="444.3" y="371.2" width="0.9" height="1.6" fill="#2f8be0"/>
<rect x="441.5" y="375.3" width="0.8" height="1.6" fill="#2f8be0"/>
<rect x="446.3" y="378.2" width="1.4" height="1.6" fill="#2f8be0"/>
<rect x="448.4" y="378.2" width="1.4" height="1.6" fill="#2f8be0"/>
<rect x="450" y="376.3" width="1.2" height="1.6" fill="#2f8be0"/>
<rect x="443" y="380.8" width="1.2" height="1.6" fill="#2f8be0"/>
<rect x="444.8" y="380.5" width="1.6" height="1.6" fill="#2f8be0"/>
<rect x="447" y="380.5" width="1.6" height="1.6" fill="#2f8be0"/>
<rect x="449.3" y="380.5" width="1.6" height="1.6" fill="#2f8be0"/>
<path d="M440 381 L450 371" stroke="#d0e4f7" stroke-width="1"/>
<rect x="506.5" y="286.5" width="39.5" height="18" fill="#fff" stroke="#bdbdbd" stroke-width="1"/>
<text x="510.9" y="297.6" font-size="10.8" fill="#666" font-weight="normal" text-anchor="start" textLength="30.3" lengthAdjust="spacingAndGlyphs" >No Fill</text>
<path d="M506.5 264.5 v15.5 l3.6 -3.4 l2.6 5.6 l2.3 -1.1 l-2.6 -5.4 l5 -0.4 z" fill="#fff" stroke="#222" stroke-width="1"/>
<g filter="url(#sh)"><circle cx="406" cy="39.2" r="22" fill="#f24346" stroke="#c8292d" stroke-width="1"/></g>
<path d="M395.0 56.8 Q406 59.7 417.0 56.8" fill="none" stroke="#ff9a9a" stroke-width="0.9" opacity="0.8"/>
<text x="406" y="50.0" font-size="30" fill="#fff" font-weight="bold" text-anchor="middle" stroke="#fff" stroke-width="1.3">7</text>
<g filter="url(#sh)"><circle cx="541.6" cy="28.5" r="17.5" fill="#f24346" stroke="#c8292d" stroke-width="1"/></g>
<path d="M532.9 42.5 Q541.6 44.8 550.4 42.5" fill="none" stroke="#ff9a9a" stroke-width="0.9" opacity="0.8"/>
<text x="541.6" y="36.96" font-size="23.5" fill="#fff" font-weight="bold" text-anchor="middle" stroke="#fff" stroke-width="1.3">6</text>
<g filter="url(#sh)"><circle cx="550" cy="264.5" r="21.8" fill="#f24346" stroke="#c8292d" stroke-width="1"/></g>
<path d="M539.1 281.9 Q550 284.8 560.9 281.9" fill="none" stroke="#ff9a9a" stroke-width="0.9" opacity="0.8"/>
<text x="550" y="275.3" font-size="30" fill="#fff" font-weight="bold" text-anchor="middle" stroke="#fff" stroke-width="1.3">8</text>
<g filter="url(#sh)"><circle cx="215.6" cy="503" r="17" fill="#f24346" stroke="#c8292d" stroke-width="1"/></g>
<path d="M207.1 516.6 Q215.6 518.8 224.1 516.6" fill="none" stroke="#ff9a9a" stroke-width="0.9" opacity="0.8"/>
<text x="215.6" y="511.46" font-size="23.5" fill="#fff" font-weight="bold" text-anchor="middle" stroke="#fff" stroke-width="1.3">5</text>
</svg></body></html>
